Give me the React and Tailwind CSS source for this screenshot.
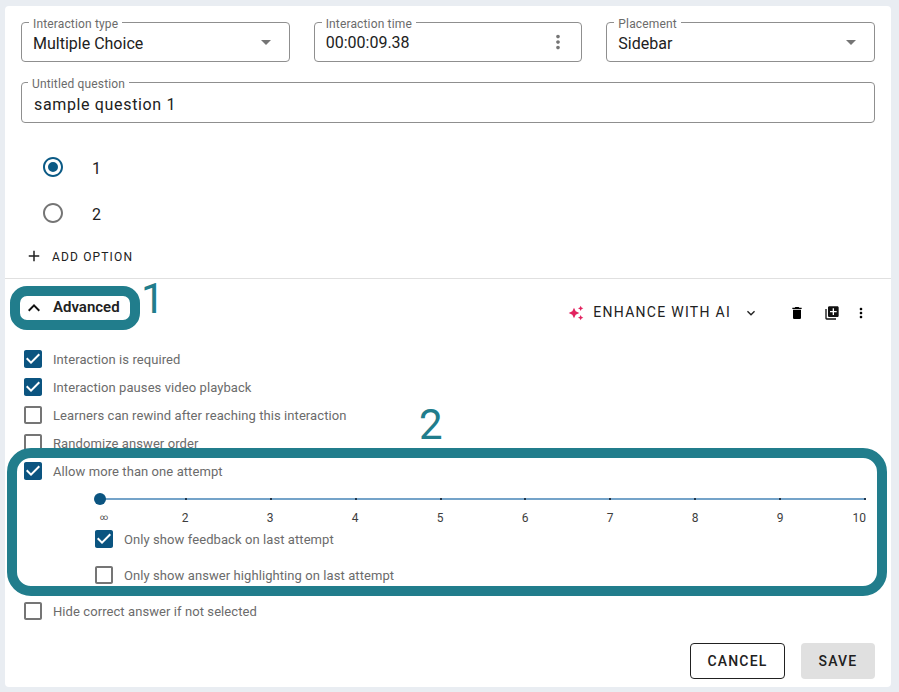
import React from 'react';

const Icon = ({ d, size = 24, className = '' }) => (
  <svg width={size} height={size} viewBox="0 0 24 24" fill="currentColor" className={`shrink-0 ${className}`}>
    <path d={d} />
  </svg>
);

const icons = {
  dropdown: 'M7 10l5 5 5-5z',
  more: 'M12 8c1.1 0 2-.9 2-2s-.9-2-2-2-2 .9-2 2 .9 2 2 2zm0 2c-1.1 0-2 .9-2 2s.9 2 2 2 2-.9 2-2-.9-2-2-2zm0 6c-1.1 0-2 .9-2 2s.9 2 2 2 2-.9 2-2-.9-2-2-2z',
  checked: 'M19 3H5c-1.11 0-2 .9-2 2v14c0 1.1.89 2 2 2h14c1.11 0 2-.9 2-2V5c0-1.1-.89-2-2-2zm-9 14l-5-5 1.41-1.41L10 14.17l7.59-7.59L19 8l-9 9z',
  unchecked: 'M19 5v14H5V5h14m0-2H5c-1.1 0-2 .9-2 2v14c0 1.1.9 2 2 2h14c1.1 0 2-.9 2-2V5c0-1.1-.9-2-2-2z',
  radioOff: 'M12 2C6.48 2 2 6.48 2 12s4.48 10 10 10 10-4.48 10-10S17.52 2 12 2zm0 18c-4.42 0-8-3.58-8-8s3.58-8 8-8 8 3.58 8 8-3.58 8-8 8z',
  radioOn: 'M12 2C6.48 2 2 6.48 2 12s4.48 10 10 10 10-4.48 10-10S17.52 2 12 2zm0 18c-4.42 0-8-3.58-8-8s3.58-8 8-8 8 3.58 8 8-3.58 8-8 8zm0-13a5 5 0 1 0 0 10 5 5 0 0 0 0-10z',
  add: 'M19 13h-6v6h-2v-6H5v-2h6V5h2v6h6v2z',
  up: 'M7.41 15.41L12 10.83l4.59 4.58L18 14l-6-6-6 6z',
  down: 'M7.41 8.59L12 13.17l4.59-4.58L18 10l-6 6-6-6 1.41-1.41z',
  sparkle: 'M19 9l1.25-2.75L23 5l-2.75-1.25L19 1l-1.25 2.75L15 5l2.75 1.25zm-7.5.5L9 4 6.5 9.5 1 12l5.5 2.5L9 20l2.5-5.5L17 12zM19 15l-1.25 2.75L15 19l2.75 1.25L19 23l1.25-2.75L23 19l-2.75-1.25z',
  trash: 'M6 19c0 1.1.9 2 2 2h8c1.1 0 2-.9 2-2V7H6v12zM19 4h-3.5l-1-1h-5l-1 1H5v2h14V4z',
  library: 'M4 6H2v14c0 1.1.9 2 2 2h14v-2H4V6zm16-4H8c-1.1 0-2 .9-2 2v12c0 1.1.9 2 2 2h12c1.1 0 2-.9 2-2V4c0-1.1-.9-2-2-2zm-1 9h-4v4h-2v-4H9V9h4V5h2v4h4v2z',
};

const Field = ({ label, value, icon, iconSize = 24, className = 'h-10', valueClass = 'mt-[3px]', labelClass = 'left-[7px]', iconClass = '', padClass = 'pl-[11px]' }) => (
  <div className={`relative flex-1 flex items-center justify-between rounded-[4px] border border-[#8f8f8f] ${className} ${padClass}`}>
    <span className={`absolute -top-[6px] bg-white px-1 text-[12px] leading-[14px] tracking-[0.15px] text-[#6b6b6b] ${labelClass}`}>{label}</span>
    <span className={`text-[16px] leading-5 text-[#212121] ${valueClass}`}>{value}</span>
    {icon && <Icon d={icon} size={iconSize} className={`text-[#757575] ${iconClass}`} />}
  </div>
);

const Radio = ({ on, label }) => (
  <div className="h-[46px] flex items-center pl-[36px]">
    <Icon d={on ? icons.radioOn : icons.radioOff} className={on ? 'text-[#0b5a85]' : 'text-[#757575]'} />
    <span className="ml-[27px] mt-1 text-[16px] text-[#212121]">{label}</span>
  </div>
);

const Check = ({ on, label, className = '' }) => (
  <div className={`h-7 flex items-center ${className}`}>
    <Icon d={on ? icons.checked : icons.unchecked} className={on ? 'text-[#0b5480]' : 'text-[#757575]'} />
    <span className="ml-2 mt-[1px] text-[13px] tracking-[0.08px] text-[#6b6b6b]">{label}</span>
  </div>
);

const steps = ['∞', '2', '3', '4', '5', '6', '7', '8', '9', '10'];

const Slider = () => (
  <div className="ml-[95px] mr-[25px] pt-[13px]">
    <div className="relative h-[2px] bg-[#74a3c9] flex justify-between">
      {steps.map((s) => (
        <span key={s} className="w-[2px] h-[2px] bg-[#23364a]" />
      ))}
      <span className="absolute -left-[6px] -top-[5px] w-3 h-3 rounded-full bg-[#0b5480]" />
    </div>
    <div className="flex justify-between mt-[11px] h-[14px] text-[12px] leading-[14px] text-[#3d3d3d]">
      {steps.map((s, i) => (
        <span key={s} className={`w-0 flex ${i === 0 ? 'justify-start items-center' : i === 9 ? 'justify-end' : 'justify-center -ml-px'}`}>
          <span className={i === 0 ? 'text-[8px]' : ''}>{s}</span>
        </span>
      ))}
    </div>
  </div>
);

export default function App() {
  return (
    <div className="relative w-[899px] h-[692px] bg-[#e9edf2] overflow-hidden pt-[6px] pl-[5px] font-['Roboto',sans-serif]">
      <div className="w-[886px] h-[681px] bg-white rounded-[4px] flex flex-col">
        <div className="px-4 pt-4">
          <div className="flex gap-6">
            <Field label="Interaction type" value="Multiple Choice" icon={icons.dropdown} iconClass="mr-[11px]" />
            <Field label="Interaction time" value="00:00:09.38" icon={icons.more} iconSize={22} valueClass="mt-[1px]" iconClass="mr-[12px]" />
            <Field label="Placement" value="Sidebar" icon={icons.dropdown} iconClass="mr-[11px]" />
          </div>
          <div className="flex mt-5">
            <Field label="Untitled question" value="sample question 1" className="h-[41px]" padClass="pl-3" labelClass="left-[6px]" valueClass="mt-[5px] tracking-[0.65px]" />
          </div>
        </div>

        <div className="mt-[21px]">
          <Radio on label="1" />
          <Radio label="2" />
        </div>

        <div className="h-10 flex items-center pl-[20px] text-[#212121]">
          <Icon d={icons.add} size={18} />
          <span className="ml-[9px] mt-[1px] text-[12px] tracking-[1.15px]">ADD OPTION</span>
        </div>

        <div className="mt-[2px] h-px bg-[#e0e0e0]" />

        <div className="h-[66px] flex items-start justify-between">
          <div className="mt-[17px] ml-[15px] w-[110px] h-[23px] flex items-center pl-[2px]">
            <Icon d={icons.up} size={24} className="text-[#111]" />
            <span className="ml-[7px] text-[15px] font-semibold text-[#212121]">Advanced</span>
          </div>
          <div className="mt-[23px] mr-[22px] flex items-center text-[#212121]">
            <Icon d={icons.sparkle} size={16} className="text-[#e2235f]" />
            <span className="ml-[9px] text-[14px] tracking-[1.28px]">ENHANCE WITH AI</span>
            <Icon d={icons.down} size={16} className="ml-[12px]" />
            <Icon d={icons.trash} size={16} className="ml-[30px] text-black" />
            <Icon d={icons.library} size={16} className="ml-[19px] text-[#111]" />
            <Icon d={icons.more} size={16} className="ml-[13px] text-black" />
          </div>
        </div>

        <div className="pl-4">
          <Check on label="Interaction is required" />
          <Check on label="Interaction pauses video playback" />
          <Check label="Learners can rewind after reaching this interaction" />
          <Check label="Randomize answer order" />
          <Check on label="Allow more than one attempt" />
        </div>

        <Slider />

        <div className="pl-[87px]">
          <Check on label="Only show feedback on last attempt" />
          <Check label="Only show answer highlighting on last attempt" className="mt-[8px]" />
        </div>

        <div className="pl-4 mt-[8px]">
          <Check label="Hide correct answer if not selected" />
        </div>

        <div className="mt-[18px] pr-4 flex justify-end gap-4">
          <button className="w-[95px] h-9 rounded-[4px] border border-[#212121] bg-white text-[14px] font-medium tracking-[1.2px] text-[#212121]">CANCEL</button>
          <button className="w-[74px] h-9 rounded-[4px] bg-[#e0e0e0] text-[14px] font-medium tracking-[1.2px] text-[#212121]">SAVE</button>
        </div>
      </div>

      {/* teal annotations drawn over the screenshot */}
      <div className="absolute left-[10px] top-[286px] w-[130px] h-[44px] rounded-[17px] border-[10px] border-[#217d8c] pointer-events-none" />
      <span className="absolute left-[141px] top-[275px] text-[42px] leading-[47px] text-[#217d8c]">1</span>
      <div className="absolute left-[7px] top-[448px] w-[880px] h-[148px] rounded-[24px] border-[10px] border-[#217d8c] pointer-events-none" />
      <span className="absolute left-[419px] top-[401px] text-[42px] leading-[47px] text-[#217d8c]">2</span>
    </div>
  );
}
